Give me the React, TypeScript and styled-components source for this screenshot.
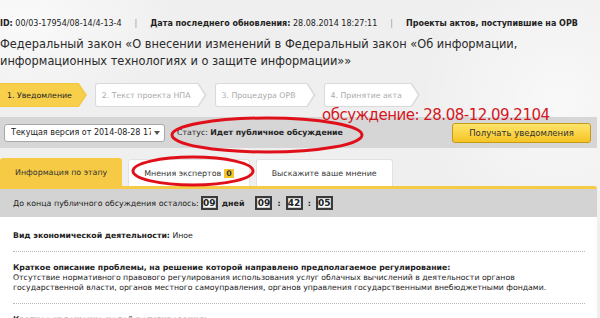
import React from 'react';
import styled, { createGlobalStyle } from 'styled-components';

const GlobalStyle = createGlobalStyle`
  html, body {
    margin: 0;
    padding: 0;
  }
  body {
    width: 600px;
    height: 318px;
    overflow: hidden;
    background: #efefef;
    font-family: "DejaVu Sans", Verdana, sans-serif;
    color: #222;
  }
`

const Page = styled.div`
  position: relative;
  width: 600px;
  height: 318px;
  overflow: hidden;
  box-sizing: border-box;
  padding-top: 17px;
  background:
    radial-gradient(ellipse 160px 90px at 20px 20px, rgba(255,255,255,0.7), transparent),
    radial-gradient(ellipse 140px 140px at 560px 100px, rgba(255,255,255,0.6), transparent),
    #efefef;
`

const Main = styled.div`
  width: 597px;
`

const Meta = styled.div`
  display: flex;
  align-items: center;
  height: 12px;
  font-size: 8px;
  white-space: nowrap;
  color: #222;
`

const Sep = styled.span`
  color: #999;
  margin: 0 13px;
`

const Title = styled.h1`
  margin: 7px 0 0;
  font-size: 11.4px;
  line-height: 17px;
  font-weight: normal;
  color: #2a2a2a;
`

const Steps = styled.div`
  display: flex;
  gap: 8px;
  margin-top: 13px;
  height: 24px;
`

const StepOuter = styled.div<{ $active?: boolean; $first?: boolean }>`
  height: 24px;
  box-sizing: border-box;
  padding: 1px 2px 1px ${p => (p.$first ? 0 : 1)}px;
  background: ${p => (p.$active ? '#f3c73e' : '#dadada')};
  border-radius: ${p => (p.$first ? '0' : '3px 0 0 3px')};
  clip-path: polygon(0 0, calc(100% - 8px) 0, 100% 50%, calc(100% - 8px) 100%, 0 100%);
`

const StepInner = styled.div<{ $active?: boolean; $first?: boolean; $tail: number }>`
  height: 100%;
  display: flex;
  align-items: center;
  box-sizing: border-box;
  padding: 0 ${p => p.$tail}px 0 ${p => (p.$first ? 7 : 6)}px;
  font-size: 7.8px;
  white-space: nowrap;
  color: ${p => (p.$active ? '#222' : '#aaa')};
  background: ${p => (p.$active ? '#f7cf4a' : '#fff')};
  border-radius: ${p => (p.$first ? '0' : '2px 0 0 2px')};
  clip-path: polygon(0 0, calc(100% - 7px) 0, 100% 50%, calc(100% - 7px) 100%, 0 100%);
`

const StatusBar = styled.div`
  display: flex;
  align-items: center;
  margin-top: 10px;
  height: 31px;
  box-sizing: border-box;
  padding: 0 6px 0 4px;
  background: #d6d6d6;
`

const VersionSelect = styled.div`
  display: flex;
  align-items: center;
  width: 161px;
  height: 18px;
  box-sizing: border-box;
  padding: 0 4px 0 6px;
  border: 1px solid #a8a8a8;
  border-radius: 3px;
  background: #fff;
  font-size: 8px;
`

const SelectText = styled.span`
  flex: 1;
  overflow: hidden;
  white-space: nowrap;
`

const Caret = styled.span`
  width: 0;
  height: 0;
  margin-left: 3px;
  border-left: 3px solid transparent;
  border-right: 3px solid transparent;
  border-top: 4px solid #555;
`

const Status = styled.div`
  margin-left: 12px;
  font-size: 7.8px;
  white-space: nowrap;
`

const NotifyButton = styled.button`
  margin-left: auto;
  width: 139px;
  height: 20px;
  padding: 0;
  border: 1px solid #c49b14;
  border-radius: 3px;
  background: linear-gradient(#fee56c, #f6c424);
  font-family: inherit;
  font-size: 8.5px;
  color: #333;
`

const Tabs = styled.div`
  display: flex;
  align-items: flex-end;
  gap: 6px;
  margin-top: 10px;
  height: 28px;
`

const Tab = styled.div<{ $active?: boolean }>`
  display: flex;
  align-items: center;
  justify-content: center;
  box-sizing: border-box;
  height: ${p => (p.$active ? 28 : 27)}px;
  padding: 0 15px;
  font-size: 7.9px;
  white-space: nowrap;
  color: #333;
  background: ${p => (p.$active ? '#f6ca45' : '#fff')};
  border: ${p => (p.$active ? 'none' : '1px solid #e2e2e2')};
  border-bottom: none;
  border-radius: 3px 3px 0 0;
`

const Badge = styled.span`
  margin-left: 3px;
  padding: 0 2px;
  background: #f5c52c;
  font-weight: bold;
`

const Panel = styled.div`
  border-top: 3px solid #f6ca45;
  border-radius: 0 3px 0 0;
`

const TimerBar = styled.div`
  display: flex;
  align-items: center;
  height: 28px;
  padding-left: 13px;
  background: #d3d3d3;
  font-size: 7.9px;
  white-space: nowrap;
`

const TimeBox = styled.span`
  display: inline-flex;
  align-items: center;
  justify-content: center;
  width: 17px;
  height: 14px;
  box-sizing: border-box;
  margin-left: 2px;
  border: 2px solid #3a3a3a;
  box-shadow: inset 0 0 0 1px #cfcfcf;
  background: #fff;
  font-size: 9px;
  font-weight: bold;
  color: #222;
`

const Days = styled.b`
  margin: 0 9px 0 4px;
`

const Colon = styled.b`
  margin: 0 3px 0 5px;
`

const Content = styled.div`
  padding: 3px 12px 0 13px;
  background: #fff;
  height: 120px;
`

const Row = styled.div`
  padding: 11px 0 10px;
  border-bottom: 1px dotted #b9b9b9;
  font-size: 7.75px;
  line-height: 10px;
  color: #222;
`

const Note = styled.div`
  position: absolute;
  left: 322px;
  top: 106px;
  font-size: 15px;
  letter-spacing: -0.5px;
  color: #d3161f;
  white-space: nowrap;
`

const Marks = styled.svg`
  position: absolute;
  left: 0;
  top: 0;
  pointer-events: none;
`

const steps = [
  { label: '1. Уведомление', tail: 13 },
  { label: '2. Текст проекта НПА', tail: 14 },
  { label: '3. Процедура ОРВ', tail: 18 },
  { label: '4. Принятие акта', tail: 16 },
];

export default function App() {
  return (
    <Page>
      <GlobalStyle />
      <Main>
        <Meta>
          <span><b>ID:</b> 00/03-17954/08-14/4-13-4</span>
          <Sep>|</Sep>
          <span><b>Дата последнего обновления:</b> 28.08.2014 18:27:11</span>
          <Sep>|</Sep>
          <b>Проекты актов, поступившие на ОРВ</b>
        </Meta>
        <Title>
          Федеральный закон «О внесении изменений в Федеральный закон «Об информации,
          <br />
          информационных технологиях и о защите информации»»
        </Title>
        <Steps>
          {steps.map((s, i) => (
            <StepOuter key={s.label} $active={i === 0} $first={i === 0}>
              <StepInner $active={i === 0} $first={i === 0} $tail={s.tail}>{s.label}</StepInner>
            </StepOuter>
          ))}
        </Steps>
        <StatusBar>
          <VersionSelect>
            <SelectText>Текущая версия от 2014-08-28 17:24:49</SelectText>
            <Caret />
          </VersionSelect>
          <Status>Статус: <b>Идет публичное обсуждение</b></Status>
          <NotifyButton>Получать уведомления</NotifyButton>
        </StatusBar>
        <Tabs>
          <Tab $active>Информация по этапу</Tab>
          <Tab>Мнения экспертов<Badge>0</Badge></Tab>
          <Tab>Выскажите ваше мнение</Tab>
        </Tabs>
        <Panel>
          <TimerBar>
            До конца публичного обсуждения осталось:
            <TimeBox>09</TimeBox>
            <Days>дней</Days>
            <TimeBox>09</TimeBox>
            <Colon>:</Colon>
            <TimeBox>42</TimeBox>
            <Colon>:</Colon>
            <TimeBox>05</TimeBox>
          </TimerBar>
          <Content>
            <Row><b>Вид экономической деятельности:</b> Иное</Row>
            <Row>
              <b>Краткое описание проблемы, на решение которой направлено предполагаемое регулирование:</b>
              <br />
              Отсутствие нормативного правового регулирования использования услуг облачных вычислений в деятельности органов
              <br />
              государственной власти, органов местного самоуправления, органов управления государственными внебюджетными фондами.
            </Row>
            <Row><b>Краткое изложение целей регулирования:</b></Row>
          </Content>
        </Panel>
      </Main>
      <Note>обсуждение: 28.08-12.09.2104</Note>
      <Marks width="600" height="318" viewBox="0 0 600 318">
        <ellipse cx="267" cy="135" rx="95" ry="17" fill="none" stroke="#e0101a" strokeWidth="3" />
        <ellipse cx="193" cy="171" rx="60" ry="14" fill="none" stroke="#e0101a" strokeWidth="3" />
      </Marks>
    </Page>
  );
}
